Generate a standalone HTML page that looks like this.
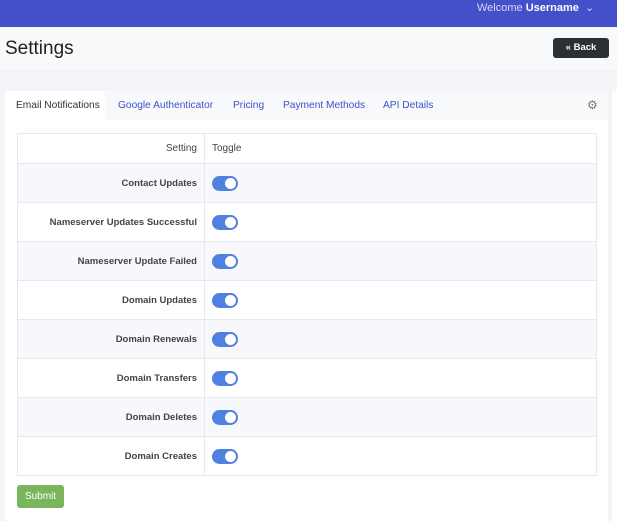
<!DOCTYPE html>
<html><head><meta charset="utf-8"><style>
*{box-sizing:border-box;margin:0;padding:0}
body{width:617px;height:510px;overflow:hidden;background:#f3f4f8;font-family:"Liberation Sans",sans-serif;position:relative;color:#333}
.top{position:absolute;left:0;top:0;width:617px;height:27px;background:#4350c9}
.welcome{position:absolute;left:477px;top:1px;font-size:11px;color:#d8dbf4}
.welcome b{color:#fff}
.hdr{position:absolute;left:0;top:28px;width:617px;height:42px;background:#f8f9fb}
h1{position:absolute;left:5px;top:38px;font-size:19px;font-weight:normal;color:#222}
.back{position:absolute;left:553px;top:38px;width:56px;height:20px;background:#2c2f33;border-radius:3px;color:#fff;font-size:9.5px;font-weight:bold;text-align:center;line-height:20px}
.card{position:absolute;left:5px;top:91px;width:603px;height:430px;background:#fff}
.side{position:absolute;left:612px;top:91px;width:5px;height:430px;background:#fff}
.tabs{position:absolute;left:0;top:0;width:603px;height:29px;background:#f8f9fb}
.tab{position:absolute;top:9px;font-size:10.2px;color:#3f51c8}
.act{position:absolute;left:0;top:0;width:100px;height:29px;background:#fff}
table{position:absolute;left:12px;top:42px;width:580px;border-collapse:collapse;font-size:9.5px}
td{border:1px solid #e6e8ee;height:39px;vertical-align:middle}
td:first-child{width:187px;text-align:right;padding-right:7px;font-weight:bold;color:#444}
td:last-child{padding-left:7px}
tr.h td{height:30px;font-weight:normal;color:#444;font-size:10px}
tr.g td{background:#f7f8fb}
.tg{display:inline-block;width:26px;height:15px;border-radius:8px;background:#5080e0;position:relative;vertical-align:middle}
.tg:after{content:"";position:absolute;right:2px;top:2px;width:11px;height:11px;border-radius:50%;background:#fff}
.sub{position:absolute;left:17px;top:485px;width:47px;height:23px;background:#7ab55c;border-radius:3px;color:#fff;font-size:10px;text-align:center;line-height:23px}
</style></head><body>
<div class="top"><div class="welcome">Welcome <b>Username</b> &nbsp;&#8964;</div></div>
<div class="hdr"></div>
<h1>Settings</h1>
<div class="back">« Back</div>
<div class="card">
<div class="tabs"><div class="act"></div>
<div class="tab" style="left:11px;color:#333">Email Notifications</div>
<div class="tab" style="left:113px">Google Authenticator</div>
<div class="tab" style="left:228px">Pricing</div>
<div class="tab" style="left:278px">Payment Methods</div>
<div class="tab" style="left:378px">API Details</div>
<div class="tab" style="left:582px;top:7px;color:#777;font-size:12px">⚙</div>
</div>
<table>
<tr class="h"><td style="font-weight:normal">Setting</td><td>Toggle</td></tr>
<tr class="g"><td>Contact Updates</td><td><span class="tg"></span></td></tr>
<tr><td>Nameserver Updates Successful</td><td><span class="tg"></span></td></tr>
<tr class="g"><td>Nameserver Update Failed</td><td><span class="tg"></span></td></tr>
<tr><td>Domain Updates</td><td><span class="tg"></span></td></tr>
<tr class="g"><td>Domain Renewals</td><td><span class="tg"></span></td></tr>
<tr><td>Domain Transfers</td><td><span class="tg"></span></td></tr>
<tr class="g"><td>Domain Deletes</td><td><span class="tg"></span></td></tr>
<tr><td>Domain Creates</td><td><span class="tg"></span></td></tr>
</table>
</div>
<div class="side"></div>
<div class="sub">Submit</div>
</body></html>
